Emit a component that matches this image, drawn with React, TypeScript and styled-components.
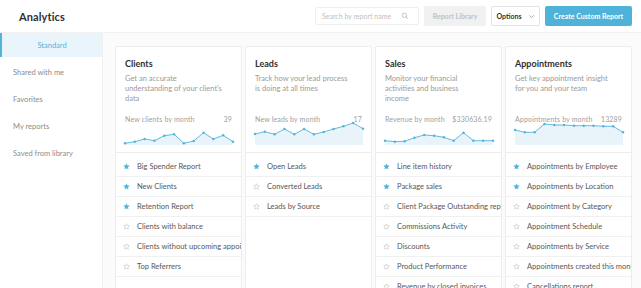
import React from "react";
import styled, { createGlobalStyle } from "styled-components";

const COLOR = {
  BLUE: "#55b3d9",
  BLUE_BG: "#eaf5fb",
  TITLE: "#2f2f2f",
  TEXT: "#575757",
  MUTED: "#9a9a9a",
  LINE: "#ededed",
  BG: "#fbfbfb",
};

const GlobalStyle = createGlobalStyle`
  body {
    margin: 0;
    background: #ffffff;
    font-family: Lato, "Open Sans", Arial, sans-serif;
  }
  * { box-sizing: border-box; }
`;

interface IReport {
  name: string;
  fav?: boolean;
}

interface ICategory {
  title: string;
  desc: string[];
  metric: string;
  value: string;
  points: number[];
  reports: IReport[];
}

const CATEGORIES: ICategory[] = [
  {
    title: "Clients",
    desc: ["Get an accurate", "understanding of your client's", "data"],
    metric: "New clients by month",
    value: "39",
    points: [19.3, 17.7, 15, 16.7, 11.7, 10.3, 19.3, 17, 8.7, 15, 11.3, 17.7],
    reports: [
      { name: "Big Spender Report", fav: true },
      { name: "New Clients", fav: true },
      { name: "Retention Report", fav: true },
      { name: "Clients with balance" },
      { name: "Clients without upcoming appointments" },
      { name: "Top Referrers" },
    ],
  },
  {
    title: "Leads",
    desc: ["Track how your lead process", "is doing at all times"],
    metric: "New leads by month",
    value: "17",
    points: [10, 7.7, 10.3, 5, 10.3, 5, 10.3, 8, 5, 2.3, -1, 4.7],
    reports: [
      { name: "Open Leads", fav: true },
      { name: "Converted Leads" },
      { name: "Leads by Source" },
    ],
  },
  {
    title: "Sales",
    desc: ["Monitor your financial", "activities and business", "income"],
    metric: "Revenue by month",
    value: "$330636.19",
    points: [16.7, 17.7, 17.3, 13.7, 11, 11.7, 13.3, 16.7, 8.7, 16.7, 16.7, 16.7],
    reports: [
      { name: "Line item history", fav: true },
      { name: "Package sales", fav: true },
      { name: "Client Package Outstanding report" },
      { name: "Commissions Activity" },
      { name: "Discounts" },
      { name: "Product Performance" },
      { name: "Revenue by closed invoices" },
    ],
  },
  {
    title: "Appointments",
    desc: ["Get key appointment insight", "for you and your team"],
    metric: "Appointments by month",
    value: "13289",
    points: [6, 8.3, 8.3, 0, 1, 1, 1.7, 1.7, 1.7, 2.3, 2.3, 8.3],
    reports: [
      { name: "Appointments by Employee", fav: true },
      { name: "Appointments by Location", fav: true },
      { name: "Appointment by Category" },
      { name: "Appointment Schedule" },
      { name: "Appointments by Service" },
      { name: "Appointments created this month" },
      { name: "Cancellations report" },
    ],
  },
];

const SIDE_ITEMS = ["Shared with me", "Favorites", "My reports", "Saved from library"];

const CHART_W = 108;
const CHART_BASE = 21;

const Sparkline = ({ points }: { points: number[] }) => {
  const step = CHART_W / (points.length - 1);
  const coords = points.map((y, i) => [i * step, y]);
  const line = coords.map(([x, y]) => `${x.toFixed(1)},${y}`).join(" ");
  const area = `0,${CHART_BASE} ${line} ${CHART_W},${CHART_BASE}`;
  return (
    <ChartSvg width={CHART_W} height={22} viewBox={`0 0 ${CHART_W} 22`}>
      <polygon points={area} fill="#e8f4fa" />
      <polyline points={line} fill="none" stroke={COLOR.BLUE} strokeWidth={0.9} />
      {coords.map(([x, y], i) => (
        <circle key={i} cx={x} cy={y} r={1.2} fill={COLOR.BLUE} />
      ))}
    </ChartSvg>
  );
};

const Star = ({ fav }: { fav?: boolean }) => (
  <StarSvg width="7" height="7" viewBox="0 0 24 24">
    <path
      d="M12 2.5l2.9 6.2 6.8.8-5 4.7 1.3 6.7L12 17.6l-6 3.3 1.3-6.7-5-4.7 6.8-.8z"
      fill={fav ? COLOR.BLUE : "none"}
      stroke={fav ? COLOR.BLUE : "#b8b8b8"}
      strokeWidth={fav ? 1 : 1.8}
      strokeLinejoin="round"
    />
  </StarSvg>
);

const App = () => {
  return (
    <>
      <GlobalStyle />
      <Page>
        <Header>
          <Title>Analytics</Title>
          <Actions>
            <Search>
              <SearchText>Search by report name</SearchText>
              <svg width="8" height="8" viewBox="0 0 24 24" fill="none" stroke="#b8b8b8" strokeWidth="2.4">
                <circle cx="10" cy="10" r="6.5" />
                <path d="M15 15l6 6" strokeLinecap="round" />
              </svg>
            </Search>
            <GhostButton>Report Library</GhostButton>
            <OutlineButton>
              Options
              <svg width="7" height="7" viewBox="0 0 24 24" fill="none" stroke="#8a8a8a" strokeWidth="2.5">
                <path d="M5 9l7 7 7-7" strokeLinecap="round" strokeLinejoin="round" />
              </svg>
            </OutlineButton>
            <PrimaryButton>Create Custom Report</PrimaryButton>
          </Actions>
        </Header>
        <Body>
          <Sidebar>
            <SideActive>Standard</SideActive>
            {SIDE_ITEMS.map((s) => (
              <SideItem key={s}>{s}</SideItem>
            ))}
          </Sidebar>
          <Main>
            {CATEGORIES.map((c) => (
              <Card key={c.title}>
                <CardTop>
                  <CardTitle>{c.title}</CardTitle>
                  <CardDesc>
                    {c.desc.map((line) => (
                      <DescLine key={line}>{line}</DescLine>
                    ))}
                  </CardDesc>
                  <MetricRow>
                    <span>{c.metric}</span>
                    <span>{c.value}</span>
                  </MetricRow>
                  <Sparkline points={c.points} />
                </CardTop>
                <ReportList>
                  {c.reports.map((r) => (
                    <ReportRow key={r.name}>
                      <Star fav={r.fav} />
                      <ReportName>{r.name}</ReportName>
                    </ReportRow>
                  ))}
                </ReportList>
              </Card>
            ))}
          </Main>
        </Body>
      </Page>
    </>
  );
};

const Page = styled.div`
  width: 641px;
  height: 288px;
  overflow: hidden;
  display: flex;
  flex-direction: column;
`;

const Header = styled.header`
  height: 33px;
  flex-shrink: 0;
  display: flex;
  align-items: center;
  justify-content: space-between;
  padding: 0 9px 0 19px;
  border-bottom: 1px solid #f1f1f1;
`;

const Title = styled.h1`
  margin: 0;
  font-size: 11px;
  font-weight: 700;
  color: ${COLOR.TITLE};
  letter-spacing: 0.1px;
`;

const Actions = styled.div`
  display: flex;
  align-items: center;
  gap: 5px;
`;

const Search = styled.div`
  width: 104px;
  height: 18px;
  display: flex;
  align-items: center;
  justify-content: space-between;
  padding: 0 9px 0 6px;
  border: 1px solid #efefef;
  border-radius: 2px;
  background: #fff;
`;

const SearchText = styled.span`
  font-size: 7px;
  color: #c0c0c0;
`;

const ButtonBase = styled.button`
  height: 20px;
  border-radius: 2px;
  font-family: inherit;
  font-size: 7px;
  font-weight: 700;
  padding: 0;
  display: flex;
  align-items: center;
  justify-content: center;
  gap: 6px;
`;

const GhostButton = styled(ButtonBase)`
  width: 62px;
  border: none;
  background: #f1f1f1;
  color: #c2c2c2;
`;

const OutlineButton = styled(ButtonBase)`
  width: 49px;
  border: 1px solid #e2e2e2;
  background: #fff;
  color: #333;
`;

const PrimaryButton = styled(ButtonBase)`
  width: 87px;
  border: none;
  background: #4fb2d8;
  color: #fff;
`;

const Body = styled.div`
  flex: 1;
  display: flex;
  min-height: 0;
`;

const Sidebar = styled.nav`
  width: 103px;
  flex-shrink: 0;
  border-right: 1px solid #efefef;
  background: #fff;
`;

const SideActive = styled.div`
  height: 24px;
  margin-bottom: 2px;
  display: flex;
  align-items: center;
  justify-content: center;
  background: ${COLOR.BLUE_BG};
  border-left: 2px solid ${COLOR.BLUE};
  color: ${COLOR.BLUE};
  font-size: 7.5px;
`;

const SideItem = styled.div`
  height: 27px;
  display: flex;
  align-items: center;
  padding-left: 13px;
  font-size: 7.5px;
  color: #8c8c8c;
`;

const Main = styled.main`
  flex: 1;
  background: ${COLOR.BG};
  padding: 13px 0 0 12px;
  display: grid;
  grid-template-columns: repeat(4, 127px);
  column-gap: 3px;
  align-items: start;
`;

const Card = styled.section`
  height: 260px;
  background: #fff;
  border: 1px solid ${COLOR.LINE};
  border-radius: 2px;
`;

const CardTop = styled.div`
  padding: 11px 9px 6px 9px;
  border-bottom: 1px solid ${COLOR.LINE};
`;

const CardTitle = styled.h2`
  margin: 0 0 5px 0;
  font-size: 9px;
  line-height: 11px;
  font-weight: 700;
  color: ${COLOR.TITLE};
`;

const CardDesc = styled.div`
  margin: 0 0 10px 0;
  height: 30px;
  font-size: 7.5px;
  line-height: 10px;
  color: ${COLOR.MUTED};
`;

const DescLine = styled.div`
  white-space: nowrap;
`;

const MetricRow = styled.div`
  height: 10px;
  display: flex;
  justify-content: space-between;
  align-items: center;
  font-size: 7px;
  letter-spacing: 0.15px;
  color: #a0a0a0;
`;

const ChartSvg = styled.svg`
  display: block;
  overflow: visible;
`;

const ReportList = styled.ul`
  list-style: none;
  margin: 0;
  padding: 4px 0 0 0;
`;

const ReportRow = styled.li`
  height: 20px;
  display: flex;
  align-items: center;
  gap: 7px;
  padding-left: 7px;
  border-bottom: 1px solid #f0f0f0;
  overflow: hidden;
`;

const StarSvg = styled.svg`
  flex-shrink: 0;
`;

const ReportName = styled.span`
  font-size: 7.5px;
  color: ${COLOR.TEXT};
  white-space: nowrap;
`;

export default App;
